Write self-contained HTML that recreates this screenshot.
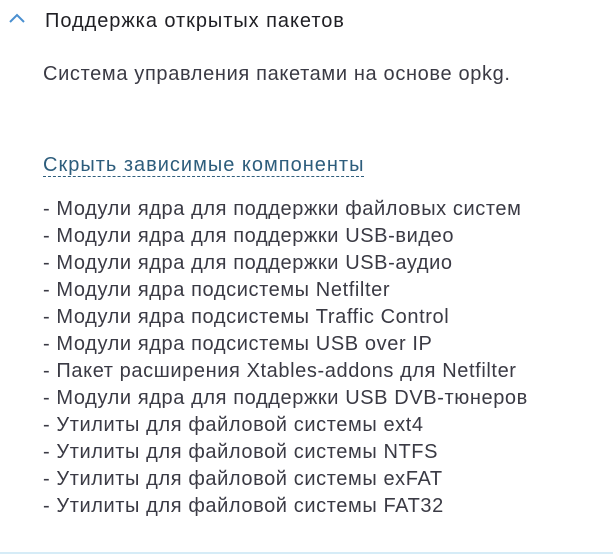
<!DOCTYPE html>
<html><head><meta charset="utf-8"><style>
html,body{margin:0;padding:0;background:#fff;}
body{width:613px;height:560px;position:relative;overflow:hidden;font-family:"Liberation Sans",sans-serif;color:#3a3a44;}
.t{position:absolute;white-space:nowrap;font-size:20px;line-height:22px;letter-spacing:0.6px;}
#title{left:45px;top:10px;color:#1f1f24;letter-spacing:0.95px;}
#desc{left:43px;top:63px;letter-spacing:0.65px;}
#link{left:43px;top:154px;color:#2d5d7c;border-bottom:1.5px dashed #2d5d7c;line-height:22px;letter-spacing:1px;}
#list{left:43px;top:196px;line-height:27px;}
#bot{position:absolute;left:0;right:0;top:552px;height:2px;background:#d6ecf7;}
</style></head><body>
<svg style="position:absolute;left:8px;top:13px" width="18" height="11" viewBox="0 0 18 11"><path d="M2 9 L9 2 L16 9" fill="none" stroke="#4a8fd0" stroke-width="2"/></svg>
<div class="t" id="title">Поддержка открытых пакетов</div>
<div class="t" id="desc">Система управления пакетами на основе opkg.</div>
<div class="t" id="link">Скрыть зависимые компоненты</div>
<div class="t" id="list">- Модули ядра для поддержки файловых систем<br>- Модули ядра для поддержки USB-видео<br>- Модули ядра для поддержки USB-аудио<br>- Модули ядра подсистемы Netfilter<br>- Модули ядра подсистемы Traffic Control<br>- Модули ядра подсистемы USB over IP<br>- Пакет расширения Xtables-addons для Netfilter<br>- Модули ядра для поддержки USB DVB-тюнеров<br>- Утилиты для файловой системы ext4<br>- Утилиты для файловой системы NTFS<br>- Утилиты для файловой системы exFAT<br>- Утилиты для файловой системы FAT32</div>
<div id="bot"></div>
</body></html>
